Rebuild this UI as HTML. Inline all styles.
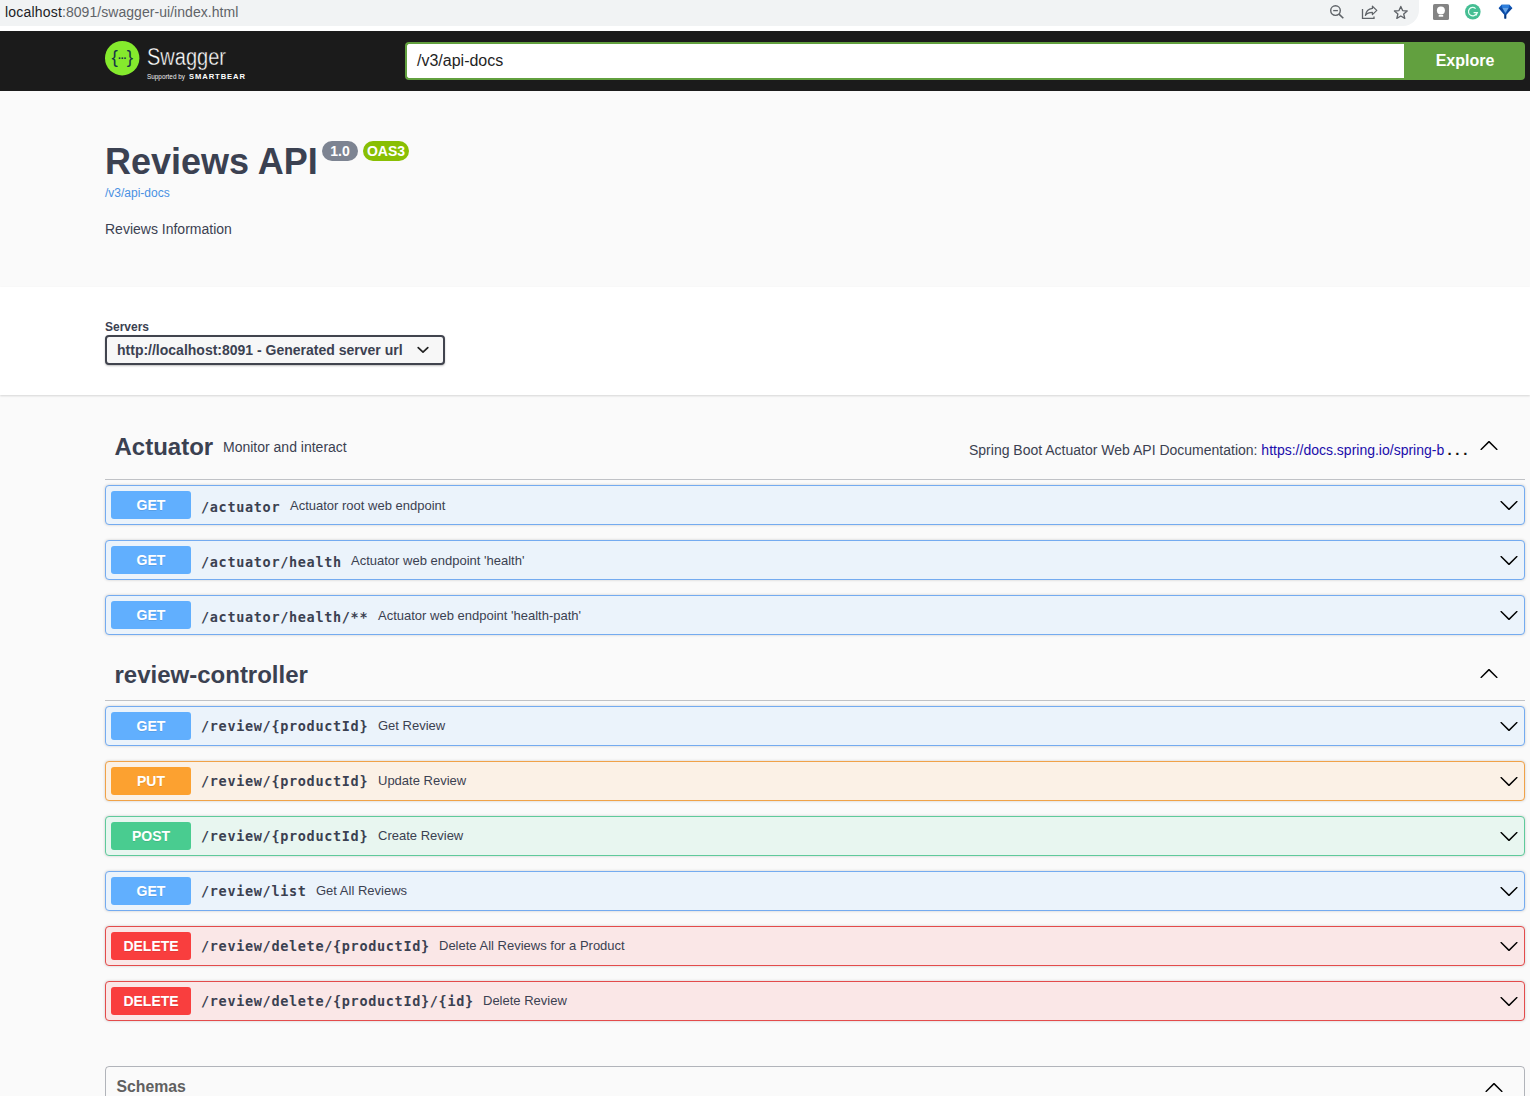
<!DOCTYPE html>
<html lang="en">
<head>
<meta charset="utf-8">
<title>Swagger UI</title>
<style>
*{box-sizing:border-box}
html,body{margin:0;padding:0}
body{width:1530px;height:1096px;overflow:hidden;background:#fafafa;font-family:"Liberation Sans",Arial,sans-serif;color:#3b4151;position:relative}
.abs{position:absolute}
/* browser chrome */
#chrome{left:0;top:0;width:1530px;height:31px;background:#fff}
#omni{left:-20px;top:0;width:1439px;height:25.5px;background:#f1f3f4;border-radius:0 0 16px 0}
#url{left:5px;top:4px;font-size:14px;line-height:16px;color:#5f6368;white-space:nowrap;letter-spacing:0.05px}
#url b{font-weight:normal;color:#202124;letter-spacing:0.19px}
/* topbar */
#topbar{left:0;top:31px;width:1530px;height:59.5px;background:#1b1b1b}
#dlinput{left:405px;top:42px;width:999px;height:38px;background:#fff;border:2px solid #62a03f;border-right:0;border-radius:4px 0 0 4px;font-size:16px;line-height:34px;padding-left:10px;color:#1f1f1f}
#explore{left:1404px;top:42px;width:121px;padding-left:1px;height:38px;background:#62a03f;border-radius:0 4px 4px 0;color:#fff;font-weight:bold;font-size:16px;line-height:38px;text-align:center}
/* info */
#title{left:105px;top:141px;font-size:36px;line-height:41px;font-weight:bold;color:#3b4151;white-space:nowrap}
.badge{height:20px;border-radius:10px;color:#fff;font-weight:bold;text-align:center;line-height:21px;font-size:14px}
#ver{left:322px;top:141px;width:36px;background:#7d8492}
#oas{left:363px;top:141px;width:46px;background:#89bf04}
#apilink{left:105px;top:186px;font-size:12px;line-height:14px;color:#4990e2}
#desc{left:105px;top:221px;font-size:14px;line-height:16px;color:#3b4151}
/* servers */
#scheme{left:0;top:287px;width:1530px;height:108px;background:#fff;box-shadow:0 1px 2px 0 rgba(0,0,0,.15)}
#srvlabel{left:105px;top:320px;font-size:12px;line-height:14px;font-weight:bold;color:#3b4151}
#select{left:105px;top:335px;width:340px;height:30px;border:2px solid #41444e;border-radius:4px;background:#f7f7f7;box-shadow:0 1px 2px 0 rgba(0,0,0,.25);font-size:14px;font-weight:bold;line-height:26px;padding-left:10px;color:#3b4151;white-space:nowrap}
/* tags */
.tag{left:105px;width:1420px;height:0;border-bottom:1px solid rgba(59,65,81,.3)}
.tagname{left:114.5px;font-size:24px;line-height:28px;font-weight:bold;color:#3b4151;white-space:nowrap}
.tagdesc{font-size:14px;line-height:16px;color:#3b4151;white-space:nowrap}
/* opblocks */
.op{left:105px;width:1420px;height:40px;border:1px solid;border-radius:4px;box-shadow:0 0 3px rgba(0,0,0,.19)}
.op .m{position:absolute;left:5px;top:5px;width:80px;height:28px;border-radius:3px;color:#fff;font-weight:bold;font-size:14px;line-height:28px;text-align:center;text-shadow:0 1px 0 rgba(0,0,0,.1)}
.op .p{position:absolute;left:95px;top:10.5px;font-family:"DejaVu Sans Mono","Liberation Mono",monospace;font-weight:bold;font-size:13.5px;letter-spacing:0.673px;line-height:20px;color:#3b4151;white-space:nowrap}
.op .d{position:absolute;top:12px;font-size:13px;line-height:16px;color:#3b4151;white-space:nowrap}
.r2 .p{top:8.8px !important}.r2 .d{top:10.6px !important}
.op svg{position:absolute;left:1393px;top:9px}
.get{border-color:#74abf0;background:#ebf3fb}.get .m{background:#61affe}
.put{border-color:#f0a248;background:#fbf1e6}.put .m{background:#fca130}
.post{border-color:#5fca9b;background:#e8f6f0}.post .m{background:#49cc90}
.del{border-color:#e34b4b;background:#fae7e7}.del .m{background:#f93e3e}
#schemas{left:105px;top:1066px;width:1420px;height:60px;border:1px solid rgba(59,65,81,.38);border-radius:4px}
#schemas span{position:absolute;left:10.5px;top:11px;font-size:15.8px;font-weight:bold;line-height:18px;color:#606060}
</style>
</head>
<body>
<div id="chrome" class="abs"></div>
<div id="omni" class="abs"></div>
<div id="url" class="abs"><b>localhost</b>:8091/swagger-ui/index.html</div>

<svg class="abs" style="left:1320px;top:0" width="210" height="26" viewBox="1320 0 210 26">
  <g fill="none" stroke="#5f6368" stroke-width="1.4">
    <circle cx="1335.5" cy="10.6" r="4.8"/>
    <path d="M1339 14.1 L1343.3 18.3" stroke-width="1.6"/>
    <path d="M1333.2 10.6 H1337.9" stroke-width="1.3"/>
    <path d="M1362.5 9 V18.3 H1374 V16.6" stroke-width="1.3"/>
    <path d="M1372.4 6.2 L1376.8 10.4 L1372.4 14.6 V12.4 C1369 12.4 1366.9 13.3 1365.4 15.4 C1365.9 11.6 1368.1 9 1372.4 8.4 Z" stroke-width="1.2" stroke-linejoin="round"/>
    <path d="M1400.8 6.4 L1402.6 10.6 L1407.2 11 L1403.7 14 L1404.8 18.4 L1400.8 16 L1396.8 18.4 L1397.9 14 L1394.4 11 L1399 10.6 Z" stroke-width="1.3" stroke-linejoin="round"/>
  </g>
  <rect x="1433" y="4" width="16" height="16" rx="1.6" fill="#848484"/>
  <circle cx="1440.9" cy="10.6" r="4" fill="#fff"/>
  <rect x="1438.7" y="15" width="4.5" height="1.7" fill="#fff"/>
  <circle cx="1472.8" cy="11.8" r="7.8" fill="#45be93"/>
  <path d="M1475.6 8.6 A4.2 4.2 0 1 0 1476.6 13.2" fill="none" stroke="#eafff6" stroke-width="1.2"/>
  <path d="M1473.6 12.6 H1477.4 L1476 15.6" fill="none" stroke="#eafff6" stroke-width="1.1"/>
  <path d="M1501.5 4.8 H1509.5 L1512.4 8 L1506.2 15 V18.6 H1504.4 V15 L1498.6 8 Z" fill="#1258b8"/>
  <path d="M1501.5 4.8 H1509.5 L1508.6 8 H1502.4 Z" fill="#2f7fdc"/>
  <path d="M1498.6 8 H1502.4 L1504.6 14.4 Z" fill="#0d479b"/>
  <path d="M1512.4 8 H1508.6 L1506 14.4 Z" fill="#0d479b"/>
  <path d="M1504.4 14.4 H1506.2 V18.6 H1504.4 Z" fill="#0a3576"/>
  <path d="M1502.4 8 H1508.6 L1505.4 13 Z" fill="#8cc4fa" opacity=".7"/>
</svg>
<div id="topbar" class="abs"></div>
<svg class="abs" style="left:105px;top:41px" width="150" height="42" viewBox="0 0 150 42">
  <circle cx="17.2" cy="17.2" r="17.2" fill="#85ea2d"/>
  <text x="9.6" y="22" text-anchor="middle" font-family="Liberation Sans, sans-serif" font-size="19" fill="#173647">{</text>
  <text x="25" y="22" text-anchor="middle" font-family="Liberation Sans, sans-serif" font-size="19" fill="#173647">}</text>
  <text x="17.2" y="18.4" text-anchor="middle" font-family="Liberation Sans, sans-serif" font-weight="bold" font-size="10.5" fill="#173647" letter-spacing="-0.2">...</text>
  <text x="42" y="24" font-family="Liberation Sans, sans-serif" font-size="23.5" fill="#fff" stroke="#1b1b1b" stroke-width="0.4" textLength="79" lengthAdjust="spacingAndGlyphs">Swagger</text>
  <text x="42" y="38" font-family="Liberation Sans, sans-serif" font-size="7" fill="#eee" textLength="38" lengthAdjust="spacingAndGlyphs">Supported by</text>
  <text x="84" y="38.2" font-family="Liberation Sans, sans-serif" font-weight="bold" font-size="7.6" fill="#fff" textLength="56" lengthAdjust="spacing">SMARTBEAR</text>
</svg>
<div id="dlinput" class="abs">/v3/api-docs</div>
<div id="explore" class="abs">Explore</div>

<div id="title" class="abs">Reviews API</div>
<div id="ver" class="abs badge">1.0</div>
<div id="oas" class="abs badge">OAS3</div>
<div id="apilink" class="abs">/v3/api-docs</div>
<div id="desc" class="abs">Reviews Information</div>

<div id="scheme" class="abs"></div>
<div id="srvlabel" class="abs">Servers</div>
<div id="select" class="abs">http://localhost:8091 - Generated server url</div>
<svg class="abs" style="left:416px;top:345px" width="14" height="10" viewBox="0 0 14 10"><path d="M2.2 2.6 L7 7.2 L11.8 2.6" fill="none" stroke="#222" stroke-width="1.7" stroke-linecap="round" stroke-linejoin="round"/></svg>

<div class="abs tagname" style="top:433px">Actuator</div>
<div class="abs tagdesc" style="left:223px;top:439px">Monitor and interact</div>
<div class="abs tagdesc" style="left:969px;top:442px">Spring Boot Actuator Web API Documentation: <span style="color:#1a0dab">https://docs.spring.io/spring-b</span><span style="letter-spacing:3.75px;color:#111;margin-left:3.2px;font-weight:bold;font-size:15px;line-height:16px">...</span></div>
<svg class="abs" style="left:1479px;top:435px" width="20" height="20" viewBox="0 0 20 20"><path d="M17.418 14.908c.272.268.709.268.979 0s.271-.701 0-.969l-7.908-7.83c-.27-.268-.707-.268-.979 0l-7.908 7.83c-.27.268-.27.701 0 .969.271.268.709.268.979 0L10 7.75l7.418 7.158z"/></svg>
<div class="abs tag" style="top:479px"></div>

<div class="abs op get" style="top:485px"><span class="m">GET</span><span class="p">/actuator</span><span class="d" style="left:184px">Actuator root web endpoint</span><svg width="20" height="20" viewBox="0 0 20 20"><path d="M17.418 6.109c.272-.268.709-.268.979 0s.271.701 0 .969l-7.908 7.83c-.27.268-.707.268-.979 0l-7.908-7.83c-.27-.268-.27-.701 0-.969.271-.268.709-.268.979 0L10 13.25l7.418-7.141z"/></svg></div>
<div class="abs op get" style="top:540px"><span class="m">GET</span><span class="p">/actuator/health</span><span class="d" style="left:245px">Actuator web endpoint 'health'</span><svg width="20" height="20" viewBox="0 0 20 20"><path d="M17.418 6.109c.272-.268.709-.268.979 0s.271.701 0 .969l-7.908 7.83c-.27.268-.707.268-.979 0l-7.908-7.83c-.27-.268-.27-.701 0-.969.271-.268.709-.268.979 0L10 13.25l7.418-7.141z"/></svg></div>
<div class="abs op get" style="top:595px"><span class="m">GET</span><span class="p">/actuator/health/**</span><span class="d" style="left:272px">Actuator web endpoint 'health-path'</span><svg width="20" height="20" viewBox="0 0 20 20"><path d="M17.418 6.109c.272-.268.709-.268.979 0s.271.701 0 .969l-7.908 7.83c-.27.268-.707.268-.979 0l-7.908-7.83c-.27-.268-.27-.701 0-.969.271-.268.709-.268.979 0L10 13.25l7.418-7.141z"/></svg></div>

<div class="abs tagname" style="top:661px">review-controller</div>
<svg class="abs" style="left:1479px;top:663px" width="20" height="20" viewBox="0 0 20 20"><path d="M17.418 14.908c.272.268.709.268.979 0s.271-.701 0-.969l-7.908-7.83c-.27-.268-.707-.268-.979 0l-7.908 7.83c-.27.268-.27.701 0 .969.271.268.709.268.979 0L10 7.75l7.418 7.158z"/></svg>
<div class="abs tag" style="top:700px"></div>

<div class="abs op get r2" style="top:706px"><span class="m">GET</span><span class="p">/review/{productId}</span><span class="d" style="left:272px">Get Review</span><svg width="20" height="20" viewBox="0 0 20 20"><path d="M17.418 6.109c.272-.268.709-.268.979 0s.271.701 0 .969l-7.908 7.83c-.27.268-.707.268-.979 0l-7.908-7.83c-.27-.268-.27-.701 0-.969.271-.268.709-.268.979 0L10 13.25l7.418-7.141z"/></svg></div>
<div class="abs op put r2" style="top:761px"><span class="m">PUT</span><span class="p">/review/{productId}</span><span class="d" style="left:272px">Update Review</span><svg width="20" height="20" viewBox="0 0 20 20"><path d="M17.418 6.109c.272-.268.709-.268.979 0s.271.701 0 .969l-7.908 7.83c-.27.268-.707.268-.979 0l-7.908-7.83c-.27-.268-.27-.701 0-.969.271-.268.709-.268.979 0L10 13.25l7.418-7.141z"/></svg></div>
<div class="abs op post r2" style="top:816px"><span class="m">POST</span><span class="p">/review/{productId}</span><span class="d" style="left:272px">Create Review</span><svg width="20" height="20" viewBox="0 0 20 20"><path d="M17.418 6.109c.272-.268.709-.268.979 0s.271.701 0 .969l-7.908 7.83c-.27.268-.707.268-.979 0l-7.908-7.83c-.27-.268-.27-.701 0-.969.271-.268.709-.268.979 0L10 13.25l7.418-7.141z"/></svg></div>
<div class="abs op get r2" style="top:871px"><span class="m">GET</span><span class="p">/review/list</span><span class="d" style="left:210px">Get All Reviews</span><svg width="20" height="20" viewBox="0 0 20 20"><path d="M17.418 6.109c.272-.268.709-.268.979 0s.271.701 0 .969l-7.908 7.83c-.27.268-.707.268-.979 0l-7.908-7.83c-.27-.268-.27-.701 0-.969.271-.268.709-.268.979 0L10 13.25l7.418-7.141z"/></svg></div>
<div class="abs op del r2" style="top:926px"><span class="m">DELETE</span><span class="p">/review/delete/{productId}</span><span class="d" style="left:333px">Delete All Reviews for a Product</span><svg width="20" height="20" viewBox="0 0 20 20"><path d="M17.418 6.109c.272-.268.709-.268.979 0s.271.701 0 .969l-7.908 7.83c-.27.268-.707.268-.979 0l-7.908-7.83c-.27-.268-.27-.701 0-.969.271-.268.709-.268.979 0L10 13.25l7.418-7.141z"/></svg></div>
<div class="abs op del r2" style="top:981px"><span class="m">DELETE</span><span class="p">/review/delete/{productId}/{id}</span><span class="d" style="left:377px">Delete Review</span><svg width="20" height="20" viewBox="0 0 20 20"><path d="M17.418 6.109c.272-.268.709-.268.979 0s.271.701 0 .969l-7.908 7.83c-.27.268-.707.268-.979 0l-7.908-7.83c-.27-.268-.27-.701 0-.969.271-.268.709-.268.979 0L10 13.25l7.418-7.141z"/></svg></div>

<div id="schemas" class="abs"><span>Schemas</span></div>
<svg class="abs" style="left:1484px;top:1077px" width="20" height="20" viewBox="0 0 20 20"><path d="M17.418 14.908c.272.268.709.268.979 0s.271-.701 0-.969l-7.908-7.83c-.27-.268-.707-.268-.979 0l-7.908 7.83c-.27.268-.27.701 0 .969.271.268.709.268.979 0L10 7.75l7.418 7.158z"/></svg>
</body>
</html>
